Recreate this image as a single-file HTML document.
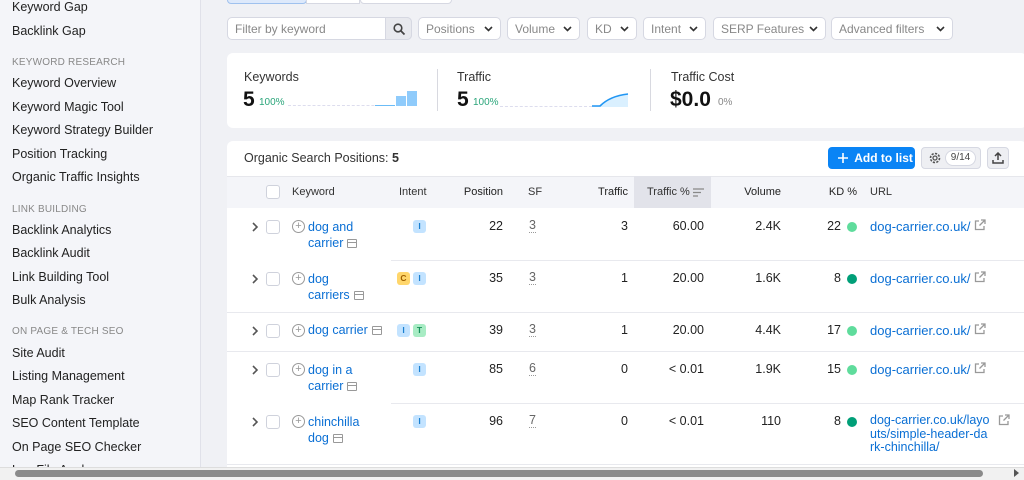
<!DOCTYPE html>
<html><head><meta charset="utf-8"><style>
*{margin:0;padding:0;box-sizing:border-box}
body{width:1024px;height:480px;overflow:hidden;background:#f0f1f5;font-family:"Liberation Sans",sans-serif;color:#333;position:relative;font-size:13px}
.a{position:absolute;white-space:nowrap}
#sb{position:absolute;left:0;top:0;width:201px;height:480px;background:#f4f5f9;border-right:1px solid #e0e1e9}
.si{position:absolute;left:12px;font-size:12.5px;color:#222}
.sh{position:absolute;left:12px;font-size:10px;color:#888;letter-spacing:.2px}
.fb{position:absolute;top:17px;height:23px;background:#fff;border:1px solid #d6d8e2;border-radius:5px;font-size:12px;color:#888;padding:4px 0 0 7px;white-space:nowrap}
.fb svg{position:absolute;right:7px;top:8px}
.card{position:absolute;background:#fff;border-radius:6px}
.num{font-size:21px;font-weight:bold;color:#111}
.pct{font-size:10px;color:#2aa57a}
.lk{color:#0a6fd4}
.r{position:absolute;font-size:12.5px;color:#222;text-align:right}
.cb{position:absolute;width:14px;height:14px;border:1px solid #cfd2dc;border-radius:3px;background:#fff}
.pl{position:absolute;width:13px;height:13px;border:1.3px solid #999;border-radius:50%;font-size:11px;line-height:10px;text-align:center;color:#999}
.bd{position:absolute;width:13px;height:13px;border-radius:3px;font-size:8.5px;font-weight:bold;text-align:center;line-height:13px}
.bI{background:#c3e3ff;color:#1a7fd0}.bC{background:#ffd66b;color:#a06000}.bT{background:#a8ecc4;color:#18905a}
.ch{position:absolute;left:251px}
.dot{position:absolute;left:847px;width:10px;height:10px;border-radius:50%}
.sf{position:absolute;left:529px;font-size:12.5px;color:#666;border-bottom:1px dotted #999;line-height:13px}
.ic{display:inline-block;width:10px;height:9px;border:1.3px solid #999;border-radius:1px;margin-left:4px;vertical-align:-1px;background:linear-gradient(#999,#999) 0 2px/100% 1.3px no-repeat}
.ext{position:absolute}
.hl{position:absolute;height:1px;background:#e8e9ee}
</style></head><body>
<svg width="0" height="0" style="position:absolute"><defs>
<symbol id="chv" viewBox="0 0 8 10"><path d="M2 1l4 4-4 4" fill="none" stroke="#555" stroke-width="1.6"/></symbol>
<symbol id="ex" viewBox="0 0 12 12"><path d="M5 2H1.5v8.5H10V7M7 1h4v4M11 1L5.5 6.5" fill="none" stroke="#999" stroke-width="1.3"/></symbol>
</defs></svg>
<div id="sb">
<div class="si" style="top:0">Keyword Gap</div>
<div class="si" style="top:24px">Backlink Gap</div>
<div class="sh" style="top:57px">KEYWORD RESEARCH</div>
<div class="si" style="top:76px">Keyword Overview</div>
<div class="si" style="top:100px">Keyword Magic Tool</div>
<div class="si" style="top:123px">Keyword Strategy Builder</div>
<div class="si" style="top:147px">Position Tracking</div>
<div class="si" style="top:170px">Organic Traffic Insights</div>
<div class="sh" style="top:204px">LINK BUILDING</div>
<div class="si" style="top:223px">Backlink Analytics</div>
<div class="si" style="top:246px">Backlink Audit</div>
<div class="si" style="top:270px">Link Building Tool</div>
<div class="si" style="top:293px">Bulk Analysis</div>
<div class="sh" style="top:326px">ON PAGE &amp; TECH SEO</div>
<div class="si" style="top:346px">Site Audit</div>
<div class="si" style="top:369px">Listing Management</div>
<div class="si" style="top:393px">Map Rank Tracker</div>
<div class="si" style="top:416px">SEO Content Template</div>
<div class="si" style="top:440px">On Page SEO Checker</div>
<div class="si" style="top:463px">Log File Analyzer</div>
</div>
<div class="a" style="left:227px;top:-6px;width:80px;height:10px;background:#dde9fb;border:1px solid #9fc1ee;border-radius:4px"></div>
<div class="a" style="left:306px;top:-6px;width:54px;height:10px;background:#fff;border:1px solid #d6d8e2"></div>
<div class="a" style="left:360px;top:-6px;width:92px;height:10px;background:#fff;border:1px solid #d6d8e2;border-radius:4px"></div>
<div class="fb" style="left:227px;width:185px">Filter by keyword</div>
<div class="a" style="left:385px;top:17px;width:27px;height:23px;background:#e8e9ee;border:1px solid #d6d8e2;border-radius:0 5px 5px 0"><svg width="13" height="13" style="margin:5px 0 0 7px" viewBox="0 0 13 13"><circle cx="5" cy="5" r="3.8" fill="none" stroke="#444" stroke-width="1.6"/><path d="M8 8l3.5 3.5" stroke="#444" stroke-width="1.8"/></svg></div>
<div class="fb" style="left:418px;width:83px">Positions<svg width="9" height="6"><path d="M1 1l3.5 3.5L8 1" fill="none" stroke="#333" stroke-width="1.6"/></svg></div>
<div class="fb" style="left:507px;width:73px">Volume<svg width="9" height="6"><path d="M1 1l3.5 3.5L8 1" fill="none" stroke="#333" stroke-width="1.6"/></svg></div>
<div class="fb" style="left:587px;width:50px">KD<svg width="9" height="6"><path d="M1 1l3.5 3.5L8 1" fill="none" stroke="#333" stroke-width="1.6"/></svg></div>
<div class="fb" style="left:643px;width:63px">Intent<svg width="9" height="6"><path d="M1 1l3.5 3.5L8 1" fill="none" stroke="#333" stroke-width="1.6"/></svg></div>
<div class="fb" style="left:713px;width:113px">SERP Features<svg width="9" height="6"><path d="M1 1l3.5 3.5L8 1" fill="none" stroke="#333" stroke-width="1.6"/></svg></div>
<div class="fb" style="left:831px;width:122px">Advanced filters<svg width="9" height="6"><path d="M1 1l3.5 3.5L8 1" fill="none" stroke="#333" stroke-width="1.6"/></svg></div>
<div class="card" style="left:227px;top:53px;width:800px;height:75px"></div>
<div class="a" style="left:244px;top:70px;font-size:12.5px">Keywords</div>
<div class="a num" style="left:243px;top:88px">5</div><div class="a pct" style="left:259px;top:97px">100%</div>
<div class="a" style="left:288px;top:105px;width:106px;border-top:1px dashed #dde"></div>
<div class="a" style="left:375px;top:105px;width:20px;height:1px;background:#6bbcf7"></div>
<div class="a" style="left:396px;top:96px;width:10px;height:10px;background:#8fcbfb"></div>
<div class="a" style="left:407px;top:91px;width:10px;height:15px;background:#8fcbfb"></div>
<div class="a" style="left:437px;top:69px;width:1px;height:42px;background:#d8d9e0"></div>
<div class="a" style="left:457px;top:70px;font-size:12.5px">Traffic</div>
<div class="a num" style="left:457px;top:88px">5</div><div class="a pct" style="left:473px;top:97px">100%</div>
<div class="a" style="left:500px;top:106px;width:92px;border-top:1px dashed #dde"></div>
<svg class="a" style="left:590px;top:92px" width="40" height="16"><path d="M2 14L10 14Q20 4 38 2L38 15L2 15Z" fill="#daf0ff"/><path d="M2 14L10 14Q20 4 38 2" fill="none" stroke="#2196f3" stroke-width="1.6"/></svg>
<div class="a" style="left:650px;top:69px;width:1px;height:42px;background:#d8d9e0"></div>
<div class="a" style="left:671px;top:70px;font-size:12.5px">Traffic Cost</div>
<div class="a num" style="left:670px;top:88px">$0.0</div><div class="a" style="left:718px;top:97px;font-size:10px;color:#888">0%</div>
<div class="card" style="left:227px;top:141px;width:800px;height:330px;border-radius:6px 6px 0 0"></div>
<div class="a" style="left:244px;top:151px;font-size:12.5px">Organic Search Positions: <b>5</b></div>
<div class="a" style="left:828px;top:147px;width:87px;height:22px;background:#0a84f5;border-radius:4px;color:#fff;font-size:12px;font-weight:bold;padding:4px 0 0 10px"><svg width="10" height="10" style="vertical-align:-1px"><path d="M5 0v10M0 5h10" stroke="#fff" stroke-width="1.6"/></svg>&nbsp; Add to list</div>
<div class="a" style="left:921px;top:147px;width:60px;height:22px;background:#eeeff3;border:1px solid #d6d8e2;border-radius:4px"><svg width="14" height="14" style="position:absolute;left:6px;top:3px" viewBox="0 0 14 14"><circle cx="7" cy="7" r="4.5" fill="none" stroke="#555" stroke-width="1.6" stroke-dasharray="2.2 1.3"/><circle cx="7" cy="7" r="2" fill="none" stroke="#555" stroke-width="1.3"/></svg><div style="position:absolute;left:23px;top:2px;width:31px;height:16px;border:1px solid #d6d8e2;border-radius:8px;background:#fff;font-size:10px;text-align:center;line-height:14px;color:#444">9/14</div></div>
<div class="a" style="left:987px;top:147px;width:22px;height:22px;background:#eeeff3;border:1px solid #d6d8e2;border-radius:4px"><svg width="12" height="12" style="margin:4px 0 0 4px"><path d="M6 8V1M3 4l3-3 3 3M1 8v3h10V8" fill="none" stroke="#444" stroke-width="1.5"/></svg></div>
<div class="a" style="left:227px;top:176px;width:800px;height:32px;background:#f4f5f9;border-top:1px solid #e6e7ec"></div>
<div class="a" style="left:634px;top:176px;width:77px;height:32px;background:#e2e3ea"></div>
<div class="cb" style="left:266px;top:185px"></div>
<div class="a" style="top:186px;left:292px;font-size:11px">Keyword</div>
<div class="a" style="top:186px;left:399px;font-size:11px">Intent</div>
<div class="r" style="top:186px;left:450px;width:53px;font-size:11px">Position</div>
<div class="a" style="top:186px;left:528px;font-size:11px">SF</div>
<div class="r" style="top:186px;left:560px;width:68px;font-size:11px">Traffic</div>
<div class="a" style="top:186px;left:647px;font-size:11px">Traffic %</div>
<svg class="a" style="left:693px;top:188px" width="12" height="9"><path d="M0 1h11M0 4.5h8M0 8h5" stroke="#888" stroke-width="1.3"/></svg>
<div class="r" style="top:186px;left:720px;width:61px;font-size:11px">Volume</div>
<div class="r" style="top:186px;left:800px;width:57px;font-size:11px">KD %</div>
<div class="a" style="top:186px;left:870px;font-size:11px">URL</div>
<div class="hl" style="left:391px;top:260px;width:640px"></div>
<div class="hl" style="left:227px;top:312px;width:800px"></div>
<div class="hl" style="left:227px;top:351px;width:800px"></div>
<div class="hl" style="left:391px;top:403px;width:640px"></div>
<div class="hl" style="left:227px;top:464px;width:800px"></div>

<svg class="ch" style="top:222px" width="8" height="10"><use href="#chv"/></svg><div class="cb" style="left:266px;top:220px"></div><div class="pl" style="left:292px;top:220px">+</div>
<div class="a lk" style="left:308px;top:219px;line-height:16px;font-size:12.5px">dog and<br>carrier<span class="ic"></span></div>
<div class="bd bI" style="left:413px;top:220px">I</div>
<div class="r" style="top:219px;left:450px;width:53px">22</div><div class="sf" style="top:219px">3</div>
<div class="r" style="top:219px;left:560px;width:68px">3</div><div class="r" style="top:219px;left:630px;width:74px">60.00</div>
<div class="r" style="top:219px;left:720px;width:61px">2.4K</div><div class="r" style="top:219px;left:800px;width:41px">22</div><div class="dot" style="top:222px;background:#5fdc9c"></div>
<div class="a lk" style="left:870px;top:219px">dog-carrier.co.uk/</div><svg class="ext" style="left:974px;top:219px" width="12" height="12"><use href="#ex"/></svg>

<svg class="ch" style="top:274px" width="8" height="10"><use href="#chv"/></svg><div class="cb" style="left:266px;top:272px"></div><div class="pl" style="left:292px;top:272px">+</div>
<div class="a lk" style="left:308px;top:271px;line-height:16px;font-size:12.5px">dog<br>carriers<span class="ic"></span></div>
<div class="bd bC" style="left:397px;top:272px">C</div><div class="bd bI" style="left:413px;top:272px">I</div>
<div class="r" style="top:271px;left:450px;width:53px">35</div><div class="sf" style="top:271px">3</div>
<div class="r" style="top:271px;left:560px;width:68px">1</div><div class="r" style="top:271px;left:630px;width:74px">20.00</div>
<div class="r" style="top:271px;left:720px;width:61px">1.6K</div><div class="r" style="top:271px;left:800px;width:41px">8</div><div class="dot" style="top:274px;background:#009f78"></div>
<div class="a lk" style="left:870px;top:271px">dog-carrier.co.uk/</div><svg class="ext" style="left:974px;top:271px" width="12" height="12"><use href="#ex"/></svg>

<svg class="ch" style="top:326px" width="8" height="10"><use href="#chv"/></svg><div class="cb" style="left:266px;top:324px"></div><div class="pl" style="left:292px;top:324px">+</div>
<div class="a lk" style="left:308px;top:323px;font-size:12.5px">dog carrier<span class="ic"></span></div>
<div class="bd bI" style="left:397px;top:324px">I</div><div class="bd bT" style="left:413px;top:324px">T</div>
<div class="r" style="top:323px;left:450px;width:53px">39</div><div class="sf" style="top:323px">3</div>
<div class="r" style="top:323px;left:560px;width:68px">1</div><div class="r" style="top:323px;left:630px;width:74px">20.00</div>
<div class="r" style="top:323px;left:720px;width:61px">4.4K</div><div class="r" style="top:323px;left:800px;width:41px">17</div><div class="dot" style="top:326px;background:#5fdc9c"></div>
<div class="a lk" style="left:870px;top:323px">dog-carrier.co.uk/</div><svg class="ext" style="left:974px;top:323px" width="12" height="12"><use href="#ex"/></svg>

<svg class="ch" style="top:365px" width="8" height="10"><use href="#chv"/></svg><div class="cb" style="left:266px;top:363px"></div><div class="pl" style="left:292px;top:363px">+</div>
<div class="a lk" style="left:308px;top:362px;line-height:16px;font-size:12.5px">dog in a<br>carrier<span class="ic"></span></div>
<div class="bd bI" style="left:413px;top:363px">I</div>
<div class="r" style="top:362px;left:450px;width:53px">85</div><div class="sf" style="top:362px">6</div>
<div class="r" style="top:362px;left:560px;width:68px">0</div><div class="r" style="top:362px;left:630px;width:74px">&lt; 0.01</div>
<div class="r" style="top:362px;left:720px;width:61px">1.9K</div><div class="r" style="top:362px;left:800px;width:41px">15</div><div class="dot" style="top:365px;background:#5fdc9c"></div>
<div class="a lk" style="left:870px;top:362px">dog-carrier.co.uk/</div><svg class="ext" style="left:974px;top:362px" width="12" height="12"><use href="#ex"/></svg>

<svg class="ch" style="top:417px" width="8" height="10"><use href="#chv"/></svg><div class="cb" style="left:266px;top:415px"></div><div class="pl" style="left:292px;top:415px">+</div>
<div class="a lk" style="left:308px;top:414px;line-height:16px;font-size:12.5px">chinchilla<br>dog<span class="ic"></span></div>
<div class="bd bI" style="left:413px;top:415px">I</div>
<div class="r" style="top:414px;left:450px;width:53px">96</div><div class="sf" style="top:414px">7</div>
<div class="r" style="top:414px;left:560px;width:68px">0</div><div class="r" style="top:414px;left:630px;width:74px">&lt; 0.01</div>
<div class="r" style="top:414px;left:720px;width:61px">110</div><div class="r" style="top:414px;left:800px;width:41px">8</div><div class="dot" style="top:417px;background:#009f78"></div>
<div class="a lk" style="left:870px;top:414px;line-height:13.5px;font-size:12.5px">dog-carrier.co.uk/layo<br>uts/simple-header-da<br>rk-chinchilla/</div><svg class="ext" style="left:998px;top:414px" width="12" height="12"><use href="#ex"/></svg>
<div class="a" style="left:0;top:467px;width:1024px;height:13px;background:#f1f1f1;border-top:1px solid #ddd"></div>
<div class="a" style="left:15px;top:470px;width:968px;height:7px;background:#8a8a8a;border-radius:4px"></div>
<div class="a" style="left:1014px;top:469px;width:0;height:0;border-left:5px solid #555;border-top:4px solid transparent;border-bottom:4px solid transparent"></div>
</body></html>
